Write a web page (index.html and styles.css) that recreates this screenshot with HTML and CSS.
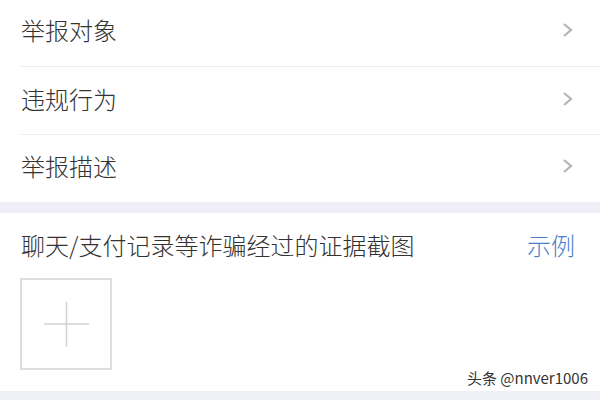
FILE: index.html
```html
<!DOCTYPE html>
<html lang="zh">
<head>
<meta charset="utf-8">
<link rel="stylesheet" href="styles.css">
</head>
<body>
<div class="page">
  <div class="list">
    <div class="row first"><span class="label">举报对象</span><svg class="chev" viewBox="0 0 12 16"><path d="M2 2 L9 8 L2 14" /></svg></div>
    <div class="row"><span class="label">违规行为</span><svg class="chev" viewBox="0 0 12 16"><path d="M2 2 L9 8 L2 14" /></svg></div>
    <div class="row last"><span class="label">举报描述</span><svg class="chev" viewBox="0 0 12 16"><path d="M2 2 L9 8 L2 14" /></svg></div>
  </div>
  <div class="band"></div>
  <div class="section">
    <div class="sec-head"><span class="label">聊天/支付记录等诈骗经过的证据截图</span><span class="link">示例</span></div>
    <div class="upload"><svg viewBox="0 0 88 88"><path d="M22 44 H67 M44.5 22 V67" /></svg></div>
  </div>
  <div class="band bottom"></div>
  <div class="watermark">头条 @nnver1006</div>
</div>
</body>
</html>
```

FILE: styles.css
```css
html, body { margin: 0; padding: 0; background: #fff; }
.page {
  position: relative;
  width: 600px;
  height: 400px;
  overflow: hidden;
  font-family: "Noto Sans CJK SC", "Noto Sans", sans-serif;
  font-weight: 300;
  color: #333;
}
.list { padding-left: 20px; }
.row {
  height: 68px;
  display: flex;
  align-items: center;
  justify-content: space-between;
  border-bottom: 1px solid #ededed;
  padding-left: 1px;
  padding-right: 26px;
  padding-bottom: 4px;
  box-sizing: border-box;
}
.row.first { height: 67px; padding-bottom: 6px; }
.row.last { border-bottom: none; height: 67px; padding-bottom: 5px; }
.label { font-size: 24px; line-height: 1; }
.chev { width: 12px; height: 16px; }
.chev path { fill: none; stroke: #b5b5b5; stroke-width: 2.2; }
.band { height: 11px; background: #eff0f7; }
.section { height: 178px; padding: 20px 20px 0 21px; box-sizing: border-box; }
.sec-head { display: flex; justify-content: space-between; align-items: center; height: 24px; padding-right: 5px; }
.link { font-size: 24px; color: #4a7fce; line-height: 1; }
.upload {
  margin-top: 21px;
  margin-left: -1px;
  width: 92px;
  height: 92px;
  border: 2px solid #dedede;
  box-sizing: border-box;
}
.upload svg { width: 88px; height: 88px; display: block; }
.upload path { stroke: #d2d2d2; stroke-width: 1.5; fill: none; }
.band.bottom { height: 10px; }
.watermark {
  position: absolute;
  right: 12px;
  bottom: 12px;
  font-size: 15px;
  font-weight: 400;
  color: #333;
  font-family: "Noto Sans CJK SC", "DejaVu Sans", sans-serif;
  text-shadow: 0 0 2px #fff;
}
```
